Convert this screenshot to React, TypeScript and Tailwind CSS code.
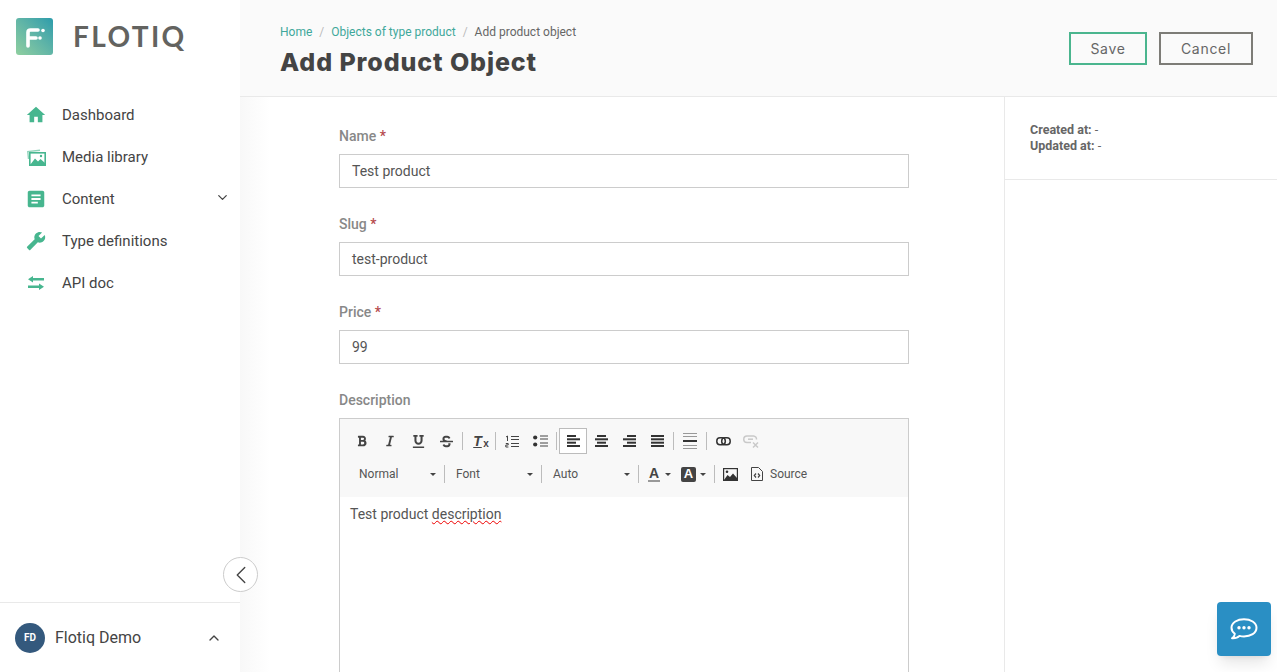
import type { ReactNode } from 'react';
import { ChevronDown, ChevronLeft, ChevronUp } from 'lucide-react';
import { MdArticle, MdBuild, MdHome } from 'react-icons/md';
import { FaBold, FaItalic, FaStrikethrough, FaUnderline } from 'react-icons/fa';

function MediaIcon() {
  return (
    <svg width="19" height="17" viewBox="0 0 19 17" fill="none">
      <path d="M1.500 10L.800 2.500 13 1.200" stroke="#8fd3ba" strokeWidth="1.400" />
      <rect x="2.800" y="3.800" width="15.400" height="12.400" stroke="#47b68f" strokeWidth="1.600" />
      <path d="M3 16L8 9.500 11 12.500 13.500 10 18 14V16.500H3Z" fill="#47b68f" />
      <circle cx="14" cy="7" r="1.200" fill="#47b68f" />
    </svg>
  );
}

function ApiIcon() {
  return (
    <svg width="16" height="14" viewBox="0 0 16 14" fill="#47b68f">
      <path d="M0 3.250L5 0V2H16V4.500H5V6.500Z" />
      <path d="M16 10.750L11 14V12H0V9.500H11V7.500Z" />
    </svg>
  );
}

const NAV = [
  { label: 'Dashboard', icon: <MdHome size={22} /> },
  { label: 'Media library', icon: <MediaIcon /> },
  { label: 'Content', icon: <MdArticle size={22} />, chevron: true },
  { label: 'Type definitions', icon: <MdBuild size={20} className="-scale-x-100" /> },
  { label: 'API doc', icon: <ApiIcon /> },
];

const FIELDS = [
  { label: 'Name', value: 'Test product' },
  { label: 'Slug', value: 'test-product' },
  { label: 'Price', value: '99' },
];

function Logo() {
  return (
    <div className="flex h-[94px] items-start pl-4 pt-[18px]">
      <div className="flex h-[37px] w-[37px] items-center justify-center rounded-[3px] bg-gradient-to-tr from-[#8fcf9f] to-[#2a9cab]">
        <svg width="22" height="22" viewBox="0 0 22 22" fill="none">
          <path d="M4 20V6.500Q4 4 6.500 4H14M4 12H12" stroke="#fff" strokeWidth="3.600" strokeLinecap="round" />
          <circle cx="19" cy="4.500" r="1.800" fill="#fff" />
          <circle cx="16" cy="12" r="1.800" fill="#fff" />
        </svg>
      </div>
      <span className="ml-[20px] font-['Lato',sans-serif] text-[28px] font-bold leading-[36px] tracking-[0.085em] text-[#636360]">
        FLOTIQ
      </span>
    </div>
  );
}

function Sidebar() {
  return (
    <aside className="relative flex h-full w-[240px] shrink-0 flex-col bg-white">
      <Logo />
      <nav className="flex flex-col">
        {NAV.map((item) => (
          <div key={item.label} className="flex h-[42px] items-center pl-[25px] pr-[10px]">
            <span className="flex w-[22px] justify-center text-[#47b68f]">{item.icon}</span>
            <span className="ml-[15px] font-['Roboto',sans-serif] text-[15px] font-[450] text-[#444]">
              {item.label}
            </span>
            {item.chevron && <ChevronDown size={15} className="mb-1 ml-auto text-[#444]" />}
          </div>
        ))}
      </nav>
      <div className="mt-auto flex h-[70px] items-center border-t border-[#e9e9e9] pl-[15px] pr-[18px]">
        <div className="flex h-[30px] w-[30px] items-center justify-center rounded-full bg-[#34597d] font-['Roboto',sans-serif] text-[10px] font-bold text-white">
          FD
        </div>
        <span className="ml-[10px] font-['Roboto',sans-serif] text-[16px] text-[#444]">Flotiq Demo</span>
        <ChevronUp size={16} className="ml-auto text-[#444]" />
      </div>
      <button className="absolute left-[223px] top-[557px] flex h-[35px] w-[35px] items-center justify-center rounded-full border border-[#ccc] bg-white text-[#444]">
        <ChevronLeft size={30} strokeWidth={1.100} />
      </button>
    </aside>
  );
}

function Header() {
  return (
    <header className="flex h-[97px] shrink-0 items-start justify-between border-b border-[#e9e9e9] bg-[#fafafa] pl-10 pr-6">
      <div className="pt-[25px]">
        <div className="flex font-['Roboto',sans-serif] text-[12px] leading-[15px]">
          <span className="text-[#3fa89b]">Home</span>
          <span className="mx-[7px] text-[#bbb]">/</span>
          <span className="text-[#3fa89b]">Objects of type product</span>
          <span className="mx-[7px] text-[#bbb]">/</span>
          <span className="text-[#666]">Add product object</span>
        </div>
        <h1 className="mt-[4px] font-['Inter',sans-serif] text-[25px] font-extrabold leading-[36px] tracking-[0.036em] text-[#444]">
          Add Product Object
        </h1>
      </div>
      <div className="flex gap-3 pt-[32px]">
        <button className="h-[33px] w-[78px] border-2 border-[#4ab58e] pb-px font-['Inter',sans-serif] text-[14px] tracking-[0.05em] text-[#666]">
          Save
        </button>
        <button className="h-[33px] w-[94px] border-2 border-[#7d7c77] pb-px font-['Inter',sans-serif] text-[14px] tracking-[0.05em] text-[#666]">
          Cancel
        </button>
      </div>
    </header>
  );
}

function Field({ label, value }: { label: string; value: string }) {
  return (
    <div className="mb-[18px]">
      <label className="block h-[36px] pt-[9px] font-['Roboto',sans-serif] text-[14px] font-medium leading-[18px] text-[#888]">
        {label} <span className="text-[#b5494d]">*</span>
      </label>
      <div className="flex h-[34px] items-center border border-[#ccc] bg-white px-3 font-['Roboto',sans-serif] text-[14px] text-[#555]">
        {value}
      </div>
    </div>
  );
}

function Sep() {
  return <span className="mx-[2px] h-[18px] w-px shrink-0 bg-[#bcbcbc]" />;
}

function Tool({ children, active }: { children: ReactNode; active?: boolean }) {
  return (
    <span
      className={
        active
          ? 'flex h-[26px] w-[28px] shrink-0 items-center justify-center border border-[#bcbcbc] bg-white text-[#333]'
          : 'flex h-[26px] w-[28px] shrink-0 items-center justify-center text-[#444]'
      }
    >
      {children}
    </span>
  );
}

// ckeditor's align icons: four thick bars, the short ones set by the alignment
function AlignIcon({ short }: { short?: 'left' | 'center' | 'right' }) {
  const x = short === 'left' ? 0 : short === 'right' ? 4 : 2;
  const w = short ? 9 : 13;
  return (
    <svg width="13" height="12" viewBox="0 0 13 12" fill="#333">
      <rect x={short ? x : 0} y="0" width={w} height="2" />
      <rect x="0" y="3.300" width="13" height="2" />
      <rect x={short ? x : 0} y="6.700" width={w} height="2" />
      <rect x="0" y="10" width="13" height="2" />
    </svg>
  );
}

function NumberedIcon() {
  return (
    <svg width="14" height="13" viewBox="0 0 14 13" fill="none" stroke="#444">
      <path d="M1 2L2.500 1V6" strokeWidth="1" />
      <path d="M.800 8.500H3.200V10H.800V12H3.400" strokeWidth="1" />
      <path d="M6 1.500H14M6 4.500H14M6 8.500H14M6 11.500H14" strokeWidth="1" />
    </svg>
  );
}

function BulletIcon() {
  return (
    <svg width="15" height="12" viewBox="0 0 15 12" fill="none" stroke="#444">
      <circle cx="2.200" cy="2.500" r="2.100" fill="#333" stroke="none" />
      <circle cx="2.200" cy="9.500" r="2.100" fill="#333" stroke="none" />
      <path d="M7 1H15M7 4H15M7 8H15M7 11H15" strokeWidth="1" />
    </svg>
  );
}

function LinkIcon() {
  return (
    <svg width="15" height="9" viewBox="0 0 15 9" fill="none" stroke="#333" strokeWidth="1.500">
      <rect x=".800" y=".800" width="8.500" height="7" rx="3.200" />
      <rect x="5.700" y=".800" width="8.500" height="7" rx="3.200" />
    </svg>
  );
}

function UnlinkIcon() {
  return (
    <svg width="16" height="13" viewBox="0 0 16 13" fill="none" stroke="#c9c9c9" strokeWidth="1.500">
      <path d="M8 7.500H4A3.200 3.200 0 0 1 4 1H10.500A3.200 3.200 0 0 1 13.500 4.500" />
      <path d="M5 4.200H10" />
      <path d="M10 7.500L15 12.500M15 7.500L10 12.500" />
    </svg>
  );
}

function ImageIcon() {
  return (
    <svg width="15" height="13" viewBox="0 0 15 13" fill="none">
      <rect x=".600" y=".600" width="13.800" height="11.800" stroke="#333" strokeWidth="1.200" />
      <path d="M1 12L4.500 7 7 9 10 5.500 14 10V12Z" fill="#333" />
      <circle cx="4" cy="3.800" r="1.300" fill="#333" />
    </svg>
  );
}

function Combo({ label }: { label: string }) {
  return (
    <span className="flex w-[92px] shrink-0 items-center justify-between pl-[9px] pr-[6px] text-[12px] text-[#555]">
      {label}
      <span className="h-0 w-0 border-x-[3px] border-t-[3px] border-x-transparent border-t-[#444]" />
    </span>
  );
}

function Toolbar() {
  return (
    <div className="h-[78px] bg-[#f8f8f8] pl-[8px] pt-[9px] font-['Roboto',sans-serif]">
      <div className="flex h-[26px] items-center">
        <Tool><FaBold size={12} /></Tool>
        <Tool><FaItalic size={12} /></Tool>
        <Tool><FaUnderline size={13} /></Tool>
        <Tool><FaStrikethrough size={13} /></Tool>
        <Sep />
        <Tool>
          <span className="relative -ml-[3px] font-['Liberation_Sans',sans-serif] text-[14px] font-bold italic leading-[14px] underline">
            T<span className="absolute -right-[7px] bottom-[-3px] text-[10px] not-italic">x</span>
          </span>
        </Tool>
        <Sep />
        <Tool><NumberedIcon /></Tool>
        <Tool><BulletIcon /></Tool>
        <Sep />
        <Tool active><AlignIcon short="left" /></Tool>
        <Tool><AlignIcon short="center" /></Tool>
        <Tool><AlignIcon short="right" /></Tool>
        <Tool><AlignIcon /></Tool>
        <Sep />
        <Tool>
          <span className="flex w-[14px] flex-col gap-[2px]">
            <span className="h-px bg-[#999]" />
            <span className="h-px bg-[#999]" />
            <span className="my-px h-[2px] bg-[#333]" />
            <span className="h-px bg-[#999]" />
            <span className="h-px bg-[#999]" />
          </span>
        </Tool>
        <Sep />
        <Tool><LinkIcon /></Tool>
        <Tool><UnlinkIcon /></Tool>
      </div>
      <div className="ml-[2px] mt-[7px] flex h-[26px] items-center">
        <Combo label="Normal" />
        <Sep />
        <Combo label="Font" />
        <Sep />
        <Combo label="Auto" />
        <Sep />
        <span className="flex h-[26px] w-[32px] shrink-0 items-center pl-[7px]">
          <span className="border-b-2 border-[#999] px-[1px] font-['Liberation_Sans',sans-serif] text-[14px] font-bold leading-[14px] text-[#444]">A</span>
          <span className="ml-[5px] h-0 w-0 border-x-[3px] border-t-[3px] border-x-transparent border-t-[#444]" />
        </span>
        <span className="flex h-[26px] w-[39px] shrink-0 items-center pl-[8px]">
          <span className="flex h-[15px] w-[15px] items-center justify-center rounded-[2px] bg-[#444] font-['Liberation_Sans',sans-serif] text-[13px] font-bold text-white">A</span>
          <span className="ml-[4px] h-0 w-0 border-x-[3px] border-t-[3px] border-x-transparent border-t-[#444]" />
        </span>
        <Sep />
        <span className="-ml-px">
          <Tool><ImageIcon /></Tool>
        </span>
        <span className="ml-[7px] flex items-center text-[12px] text-[#555]">
          <svg width="12" height="14" viewBox="0 0 12 14" fill="none" stroke="#444">
            <path d="M.500.500H7.500L11.500 4.500V13.500H.500Z" />
            <path d="M5 6.500L3.300 8.500L5 10.500M7 6.500L8.700 8.500L7 10.500" strokeWidth="1.200" />
          </svg>
          <span className="ml-[7px]">Source</span>
        </span>
      </div>
    </div>
  );
}

function Editor() {
  return (
    <div className="h-[300px] border border-[#ccc] bg-white">
      <Toolbar />
      <div className="px-[10px] pt-[7px] font-['Roboto',sans-serif] text-[14px] leading-[20px] text-[#555]">
        Test product{' '}
        <span className="underline decoration-[#e00] decoration-wavy decoration-1">description</span>
      </div>
    </div>
  );
}

export default function App() {
  return (
    <div className="relative flex h-[672px] w-[1277px] overflow-hidden bg-white">
      <Sidebar />
      <main className="flex min-w-0 flex-1 flex-col">
        <Header />
        <div className="flex min-h-0 flex-1">
          <div className="flex-1 overflow-hidden bg-gradient-to-r from-[#f8f8f8] to-white to-[30px] pl-[99px] pt-[21px]">
            <div className="w-[570px]">
              {FIELDS.map((f) => (
                <Field key={f.label} label={f.label} value={f.value} />
              ))}
              <label className="block h-[36px] pt-[9px] font-['Roboto',sans-serif] text-[14px] font-medium leading-[18px] text-[#888]">
                Description
              </label>
              <Editor />
            </div>
          </div>
          <div className="w-[273px] shrink-0 border-l border-[#e9e9e9] bg-white">
            <div className="h-[83px] border-b border-[#e9e9e9] pl-[25px] pt-[25px] font-['Roboto',sans-serif] text-[12.500px] leading-[16px] text-[#666]">
              <div><span className="font-bold">Created at:</span> -</div>
              <div><span className="font-bold">Updated at:</span> -</div>
            </div>
          </div>
        </div>
      </main>
      <button className="absolute left-[1217px] top-[602px] flex h-[54px] w-[54px] items-center justify-center rounded-[4px] bg-[#2a8fc4] shadow-lg">
        <svg width="28" height="22" viewBox="0 0 28 22" fill="none">
          <path
            d="M14 1.200C7.500 1.200 1.500 4.500 1.500 9.800C1.500 12.300 2.900 14.300 4.800 15.700C4.700 17.300 3.800 19.200 2 20.300C5 20.500 8 19.500 9.500 17.900C11 18.300 12.500 18.500 14 18.500C20.500 18.500 26.500 15.200 26.500 9.800C26.500 4.500 20.500 1.200 14 1.200Z"
            stroke="#fff"
            strokeWidth="2"
            strokeLinejoin="round"
          />
          <circle cx="9" cy="9.800" r="1.700" fill="#fff" />
          <circle cx="14" cy="9.800" r="1.700" fill="#fff" />
          <circle cx="19" cy="9.800" r="1.700" fill="#fff" />
        </svg>
      </button>
    </div>
  );
}
